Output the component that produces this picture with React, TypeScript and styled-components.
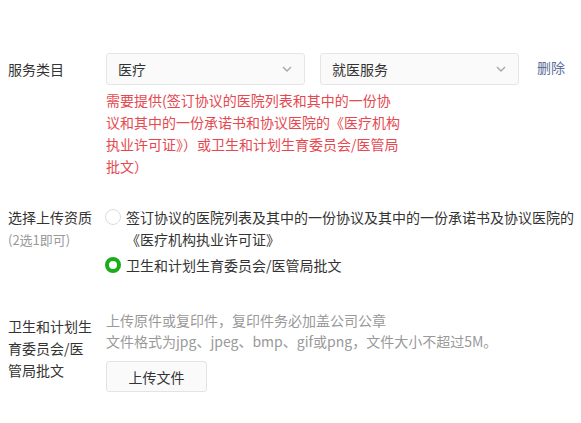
import styled, { createGlobalStyle } from "styled-components";

const GlobalStyle = createGlobalStyle`
  html, body {
    margin: 0;
    padding: 0;
    background: #fff;
  }
  body {
    font-family: "Noto Sans CJK SC", "Noto Sans", sans-serif;
    font-size: 14px;
    color: #333;
  }
`

const Form = styled.div`
  padding: 53px 0 0 8px;
`

const Row = styled.div<{ $space: number }>`
  display: flex;
  align-items: flex-start;
  margin-bottom: ${(p) => p.$space}px;
`

const Label = styled.div`
  width: 86px;
  margin-right: 12px;
  padding-top: 5px;
  font-size: 14px;
  line-height: 22px;
  color: #333;
  flex-shrink: 0;
`

const SubLabel = styled.div`
  font-size: 13px;
  line-height: 24px;
  color: #999;
`

const Content = styled.div`
  flex: 1;
  min-width: 0;
`

const SelectLine = styled.div`
  display: flex;
  align-items: center;
`

const SelectBox = styled.div`
  width: 199px;
  height: 32px;
  box-sizing: border-box;
  border: 1px solid #e6e6e6;
  border-radius: 3px;
  background: #fafafa;
  display: flex;
  align-items: center;
  justify-content: space-between;
  padding: 0 12px 0 11px;
  font-size: 14px;
  color: #333;
  & + & {
    margin-left: 15px;
  }
`

const DeleteLink = styled.a`
  margin-left: 18px;
  margin-top: -5px;
  font-size: 14px;
  color: #5b6e99;
  cursor: pointer;
`

const Warning = styled.p`
  margin: 4px 0 0;
  width: 295px;
  font-size: 14px;
  line-height: 22px;
  color: #e5484f;
`

const RadioGroup = styled.div`
  padding-top: 5px;
`

const Option = styled.label`
  display: flex;
  align-items: flex-start;
  & + & {
    margin-top: 4px;
  }
`

const RadioDot = styled.span<{ $checked?: boolean }>`
  width: 16px;
  height: 16px;
  margin: 3px 5px 0 -1px;
  box-sizing: border-box;
  border-radius: 50%;
  flex-shrink: 0;
  border: ${(p) => (p.$checked ? "4px solid #1aad19" : "1px solid #dcdcdc")};
  background: #fff;
`

const OptionText = styled.span`
  font-size: 14px;
  line-height: 22px;
  color: #333;
`

const Hint = styled.p`
  margin: 0;
  font-size: 14px;
  line-height: 21px;
  color: #999;
`

const UploadButton = styled.button`
  margin-top: 9px;
  width: 101px;
  height: 31px;
  border: 1px solid #e3e3e3;
  border-radius: 3px;
  background: #fafafa;
  font-family: inherit;
  font-size: 14px;
  color: #333;
  padding: 0;
`

function Chevron() {
  return (
    <svg width="10" height="6" viewBox="0 0 10 6" fill="none">
      <path d="M1 1l4 4 4-4" stroke="#a8a8a8" strokeWidth="1.4" />
    </svg>
  )
}

export default function App() {
  return (
    <>
      <GlobalStyle />
      <Form>
        <Row $space={24}>
          <Label>服务类目</Label>
          <Content>
            <SelectLine>
              <SelectBox>医疗<Chevron /></SelectBox>
              <SelectBox>就医服务<Chevron /></SelectBox>
              <DeleteLink>删除</DeleteLink>
            </SelectLine>
            <Warning>
              需要提供(签订协议的医院列表和其中的一份协议和其中的一份承诺书和协议医院的《医疗机构执业许可证》）或卫生和计划生育委员会/医管局批文）
            </Warning>
          </Content>
        </Row>
        <Row $space={34}>
          <Label>
            选择上传资质
            <SubLabel>(2选1即可)</SubLabel>
          </Label>
          <Content>
            <RadioGroup>
              <Option>
                <RadioDot />
                <OptionText>签订协议的医院列表及其中的一份协议及其中的一份承诺书及协议医院的《医疗机构执业许可证》</OptionText>
              </Option>
              <Option>
                <RadioDot $checked />
                <OptionText>卫生和计划生育委员会/医管局批文</OptionText>
              </Option>
            </RadioGroup>
          </Content>
        </Row>
        <Row $space={0}>
          <Label>卫生和计划生育委员会/医管局批文</Label>
          <Content>
            <Hint>上传原件或复印件，复印件务必加盖公司公章</Hint>
            <Hint>文件格式为jpg、jpeg、bmp、gif或png，文件大小不超过5M。</Hint>
            <UploadButton>上传文件</UploadButton>
          </Content>
        </Row>
      </Form>
    </>
  )
}
